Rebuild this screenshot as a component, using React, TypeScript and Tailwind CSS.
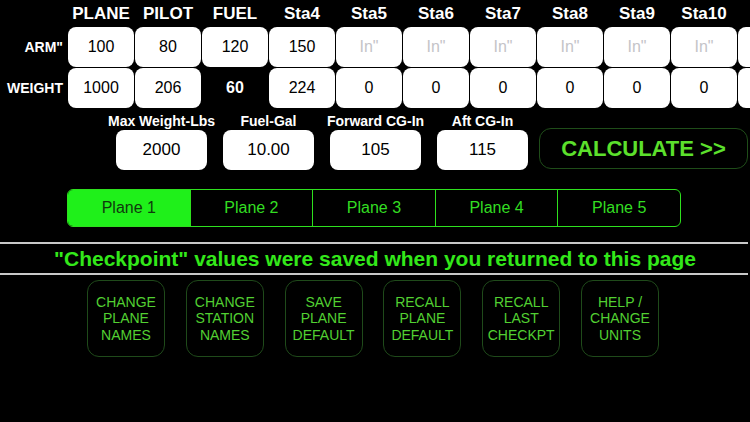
import React from "react";

const cols = ["PLANE", "PILOT", "FUEL", "Sta4", "Sta5", "Sta6", "Sta7", "Sta8", "Sta9", "Sta10", ""];
const arms = ["100", "80", "120", "150", "", "", "", "", "", "", ""];
const weights = ["1000", "206", null, "224", "0", "0", "0", "0", "0", "0", ""];

const limits = [
  { label: "Max Weight-Lbs", value: "2000" },
  { label: "Fuel-Gal", value: "10.00" },
  { label: "Forward CG-In", value: "105" },
  { label: "Aft CG-In", value: "115" },
];

const planes = ["Plane 1", "Plane 2", "Plane 3", "Plane 4", "Plane 5"];

const actions = [
  ["CHANGE", "PLANE", "NAMES"],
  ["CHANGE", "STATION", "NAMES"],
  ["SAVE", "PLANE", "DEFAULT"],
  ["RECALL", "PLANE", "DEFAULT"],
  ["RECALL", "LAST", "CHECKPT"],
  ["HELP /", "CHANGE", "UNITS"],
];

function Cell({ children, placeholder }: { children?: React.ReactNode; placeholder?: boolean }) {
  return (
    <div
      className={`flex h-[40px] w-[66px] shrink-0 items-center justify-center rounded-lg bg-white text-[16px] ${
        placeholder ? "text-[#c4c4c8]" : "text-black"
      }`}
    >
      {children}
    </div>
  );
}

export default function App() {
  return (
    <div className="h-[422px] w-[750px] overflow-hidden bg-black font-['Liberation_Sans',Arial,sans-serif]">
      {/* Station grid */}
      <div className="flex h-[27px] items-center">
        <div className="w-[68px] shrink-0" />
        <div className="flex gap-px">
          {cols.map((c, i) => (
            <div key={i} className="w-[66px] shrink-0 pt-[1px] text-center text-[17px] font-bold text-white">
              {c}
            </div>
          ))}
        </div>
      </div>

      <div className="flex items-center">
        <div className="w-[68px] shrink-0 pr-[5px] text-right text-[14px] font-bold text-white">ARM"</div>
        <div className="flex gap-px">
          {arms.map((a, i) => (
            <Cell key={i} placeholder={!a && i < 10}>
              {a || (i < 10 ? 'In"' : "")}
            </Cell>
          ))}
        </div>
      </div>

      <div className="mt-px flex items-center">
        <div className="w-[68px] shrink-0 pr-[5px] text-right text-[14px] font-bold text-white">WEIGHT</div>
        <div className="flex gap-px">
          {weights.map((w, i) =>
            w === null ? (
              <div key={i} className="flex h-[40px] w-[66px] shrink-0 items-center justify-center text-[16px] font-bold text-white">
                60
              </div>
            ) : (
              <Cell key={i}>{w}</Cell>
            )
          )}
        </div>
      </div>

      {/* Limits + calculate */}
      <div className="mt-[5px] flex items-end pl-[116px]">
        <div className="flex gap-[16px]">
          {limits.map((l) => (
            <div key={l.label} className="flex w-[91px] flex-col items-center">
              <div className="h-[17px] whitespace-nowrap text-[14px] font-bold leading-[17px] text-white">{l.label}</div>
              <div className="flex h-[40px] w-[91px] items-center justify-center rounded-lg bg-white text-[17px] text-black">
                {l.value}
              </div>
            </div>
          ))}
        </div>
        <button className="mb-[1px] ml-[11px] flex h-[41px] w-[209px] items-center justify-center rounded-xl border border-[#1f4d19] bg-black text-[22px] font-bold text-[#5ce02c]">
          CALCULATE &gt;&gt;
        </button>
      </div>

      {/* Plane selector */}
      <div className="ml-[67px] mt-[19px] flex h-[38px] w-[614px] overflow-hidden rounded-md border border-[#2ee01e]">
        {planes.map((p, i) => (
          <div
            key={p}
            className={`flex flex-1 items-center justify-center text-[16px] ${
              i === 0 ? "bg-[#1ff01a] text-[#0f3a0d]" : "border-l border-[#2ee01e] text-[#33dd22]"
            }`}
          >
            {p}
          </div>
        ))}
      </div>

      {/* Checkpoint notice */}
      <div className="mt-[15px] h-[2px] w-[748px] bg-[#c8c8c8]" />
      <div className="flex h-[29px] items-center justify-center text-[21px] font-bold text-[#33e81a]">
        "Checkpoint" values were saved when you returned to this page
      </div>
      <div className="h-[2px] w-[748px] bg-[#c8c8c8]" />

      {/* Action buttons */}
      <div className="ml-[87px] mt-[5px] flex gap-[20.8px]">
        {actions.map((a, i) => (
          <button
            key={i}
            className="flex h-[77px] w-[78px] flex-col items-center justify-center rounded-xl border border-[#1f4a1a] bg-black text-[14px] leading-[16.5px] text-[#52d032]"
          >
            {a.map((line) => (
              <span key={line}>{line}</span>
            ))}
          </button>
        ))}
      </div>
    </div>
  );
}
